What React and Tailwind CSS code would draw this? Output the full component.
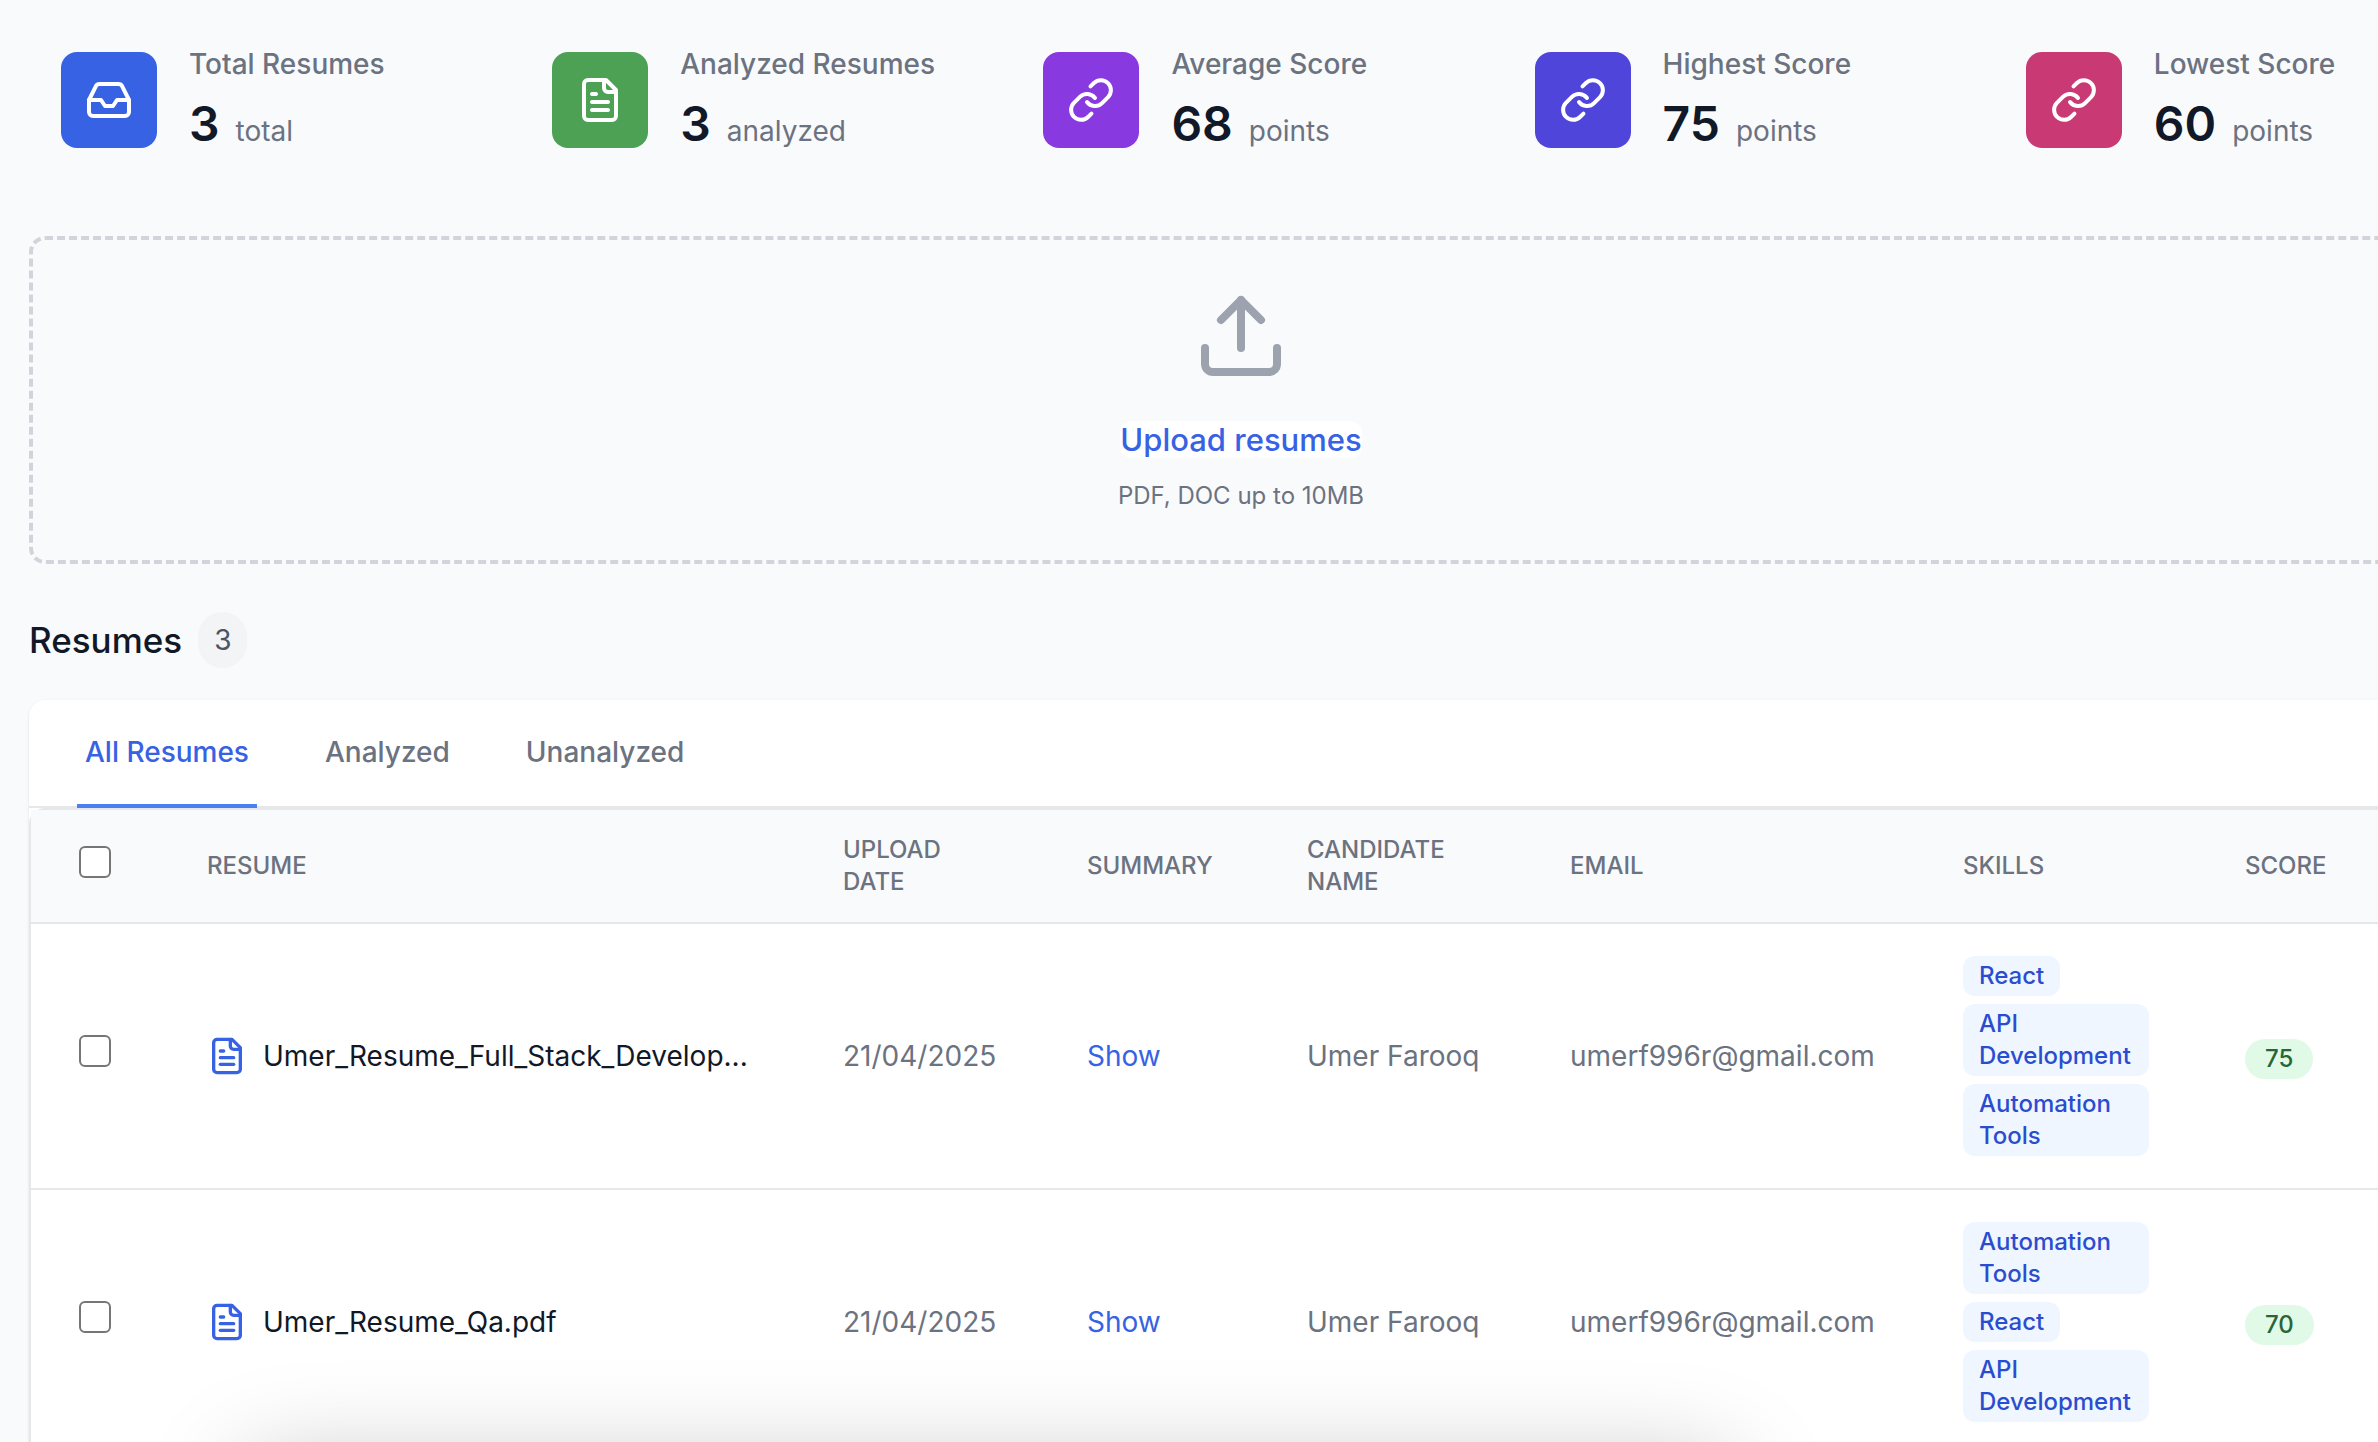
import { Inbox, Link, Upload } from "lucide-react";

function FileTextIcon({ className }) {
  return (
    <svg
      className={className}
      viewBox="0 0 24 24"
      fill="none"
      stroke="currentColor"
      strokeWidth="2"
      strokeLinecap="round"
      strokeLinejoin="round"
      aria-hidden="true"
    >
      <path d="M15 2H6a2 2 0 0 0-2 2v16a2 2 0 0 0 2 2h12a2 2 0 0 0 2-2V7Z" />
      <path d="M14 2v4a2 2 0 0 0 2 2h4" />
      <path d="M10 9H8" />
      <path d="M16 13H8" />
      <path d="M16 17H8" />
    </svg>
  );
}

const stats = [
  { label: "Total Resumes", value: 3, unit: "total", color: "bg-[#3762e3]", Icon: Inbox },
  { label: "Analyzed Resumes", value: 3, unit: "analyzed", color: "bg-[#4ca154]", Icon: FileTextIcon },
  { label: "Average Score", value: 68, unit: "points", color: "bg-[#8839df]", Icon: Link },
  { label: "Highest Score", value: 75, unit: "points", color: "bg-[#4f45da]", Icon: Link },
  { label: "Lowest Score", value: 60, unit: "points", color: "bg-[#c93a75]", Icon: Link },
];

const tabs = ["All Resumes", "Analyzed", "Unanalyzed"];

const rows = [
  {
    file: "Umer_Resume_Full_Stack_Develop...",
    date: "21/04/2025",
    name: "Umer Farooq",
    email: "umerf996r@gmail.com",
    skills: ["React", "API Development", "Automation Tools"],
    score: 75,
  },
  {
    file: "Umer_Resume_Qa.pdf",
    date: "21/04/2025",
    name: "Umer Farooq",
    email: "umerf996r@gmail.com",
    skills: ["Automation Tools", "React", "API Development"],
    score: 70,
  },
];

function Stat({ label, value, unit, color, Icon }) {
  return (
    <div className="flex items-center gap-8 px-8">
      <div className={`rounded-2xl p-6 text-white ${color}`}>
        <Icon className="size-12" />
      </div>
      <dl>
        <dt className="text-[28px] leading-10 font-medium text-[#6b7280]">{label}</dt>
        <dd className="mt-2 flex items-baseline gap-4">
          <span className="text-[48px] leading-16 font-semibold text-[#111827]">{value}</span>
          <span className="text-[28px] leading-10 text-[#6b7280]">{unit}</span>
        </dd>
      </dl>
    </div>
  );
}

function Checkbox({ label }) {
  return (
    <input
      type="checkbox"
      aria-label={label}
      className="size-8 appearance-none rounded-md border-2 border-[#767676] bg-white checked:bg-[#3762e3]"
    />
  );
}

function HeaderCell({ children }) {
  return (
    <th scope="col" className="px-12 py-6 text-left align-middle font-medium">
      {children}
    </th>
  );
}

function ResumeRow({ file, date, name, email, skills, score }) {
  return (
    <tr className="border-b-2 border-[#e5e7eb]">
      <td className="px-12 py-8">
        <Checkbox label={`Select ${file}`} />
      </td>
      <td className="px-12 py-8">
        <div className="flex items-center gap-4 text-[#111827]">
          <FileTextIcon className="size-10 shrink-0 text-[#3762e3]" />
          <span className="whitespace-nowrap">{file}</span>
        </div>
      </td>
      <td className="px-12 py-8 whitespace-nowrap">{date}</td>
      <td className="px-12 py-8">
        <button type="button" className="text-[#3762e3]">
          Show
        </button>
      </td>
      <td className="px-12 py-8 whitespace-nowrap">{name}</td>
      <td className="px-12 py-8 whitespace-nowrap">{email}</td>
      <td className="px-12 py-8">
        <div className="flex flex-wrap gap-2">
          {skills.map((skill) => (
            <span
              key={skill}
              className="rounded-xl bg-[#eff6ff] px-4 py-1 text-[24px] leading-8 font-medium text-[#2a4dd0]"
            >
              {skill}
            </span>
          ))}
        </div>
      </td>
      <td className="px-12 pt-9 pb-8">
        <span className="inline-flex rounded-full bg-[#e0fae7] px-5 py-1 text-[24px] leading-8 font-medium text-[#2b6437]">
          {score}
        </span>
      </td>
    </tr>
  );
}

export default function App() {
  return (
    <div className="relative h-screen overflow-hidden bg-[#f9fafc] font-['Inter',sans-serif]">
      <main className="-mr-[75px] ml-[29px] pt-11">
        <section className="grid grid-cols-5 gap-8" aria-label="Statistics">
          {stats.map((stat) => (
            <Stat key={stat.label} {...stat} />
          ))}
        </section>

        <section className="mt-20 flex flex-col items-center rounded-2xl border-4 border-dashed border-[#d1d5db] py-12">
          <Upload className="size-24 text-[#9ca3af]" />
          <div className="mt-8 text-[31px] leading-12">
            <button type="button" className="inline font-medium text-[#3762e3]">
              <span className="rounded-xl bg-white">Upload resumes</span>
            </button>
          </div>
          <p className="mt-4 text-[24px] leading-8 text-[#6b7280]">PDF, DOC up to 10MB</p>
        </section>

        <div className="mt-12 flex items-center gap-4">
          <h2 className="text-[35px] leading-14 font-medium text-[#111827]">Resumes</h2>
          <span className="rounded-full bg-[#f3f4f6] px-4 py-2 text-[28px] leading-10 text-[#4b5563]">3</span>
        </div>

        <section className="mt-8 rounded-2xl bg-white shadow-sm">
          <div className="border-b-2 border-[#e5e7eb] px-12">
            <nav className="-mb-0.5 flex gap-15" aria-label="Resume filters">
              {tabs.map((tab, i) => (
                <button
                  key={tab}
                  type="button"
                  className={`border-b-4 px-2 py-8 text-[28px] leading-10 font-medium ${
                    i === 0 ? "border-[#4b80ee] text-[#3762e3]" : "border-transparent text-[#6b7280]"
                  }`}
                >
                  {tab}
                </button>
              ))}
            </nav>
          </div>

          <div className="rounded-2xl border-2 border-[#e5e7eb]">
            <table className="w-full table-fixed border-collapse text-[28px] leading-10 text-[#6b7280]">
              <colgroup>
                <col className="w-32" />
                <col className="w-[636px]" />
                <col className="w-[244px]" />
                <col className="w-[220px]" />
                <col className="w-[263px]" />
                <col className="w-[393px]" />
                <col className="w-[282px]" />
                <col />
              </colgroup>
              <thead className="bg-[#f9fafc] text-[24px] leading-8 uppercase">
                <tr className="border-b-2 border-[#e5e7eb]">
                  <HeaderCell>
                    <Checkbox label="Select all resumes" />
                  </HeaderCell>
                  <HeaderCell>Resume</HeaderCell>
                  <HeaderCell>Upload Date</HeaderCell>
                  <HeaderCell>Summary</HeaderCell>
                  <HeaderCell>Candidate Name</HeaderCell>
                  <HeaderCell>Email</HeaderCell>
                  <HeaderCell>Skills</HeaderCell>
                  <HeaderCell>Score</HeaderCell>
                </tr>
              </thead>
              <tbody>
                {rows.map((row) => (
                  <ResumeRow key={row.file} {...row} />
                ))}
              </tbody>
            </table>
          </div>
        </section>
      </main>

      <div
        className="pointer-events-none absolute top-full right-[648px] left-[245px] mt-6 h-40 rounded-3xl shadow-[0_0_100px_rgba(0,0,0,0.25)]"
        aria-hidden="true"
      />
    </div>
  );
}
